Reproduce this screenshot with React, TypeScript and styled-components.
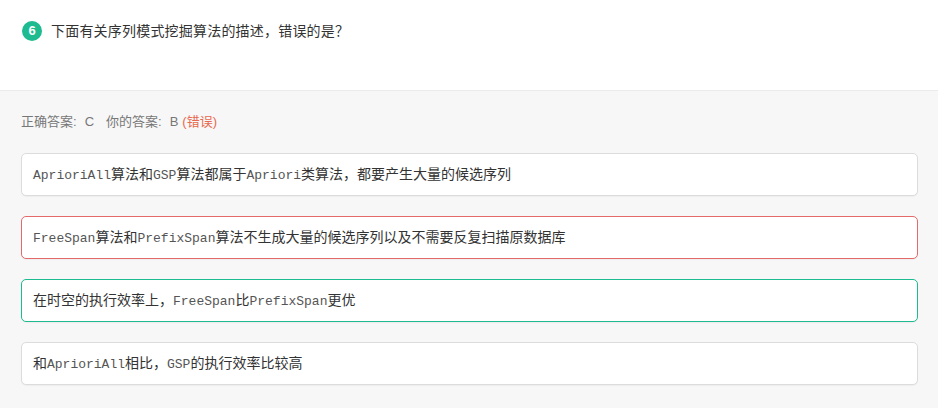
import React from "react";
import styled, { createGlobalStyle } from "styled-components";

const Global = createGlobalStyle`
  html, body { margin: 0; padding: 0; background: #f7f7f7; }
  body { font-family: "Liberation Sans", "Noto Sans CJK SC", sans-serif; }
  * { box-sizing: border-box; }
`;

const GREEN = "#1dbb8f";

const Page = styled.div`
  width: 938px;
  height: 408px;
  background: #f7f7f7;
  overflow: hidden;
`;

const QuestionBar = styled.div`
  height: 91px;
  background: #fff;
  border-bottom: 1px solid #ebebeb;
  padding: 21px 22px 0;
  display: flex;
  align-items: flex-start;
  gap: 9px;
`;

const Badge = styled.span`
  width: 20px;
  height: 20px;
  border-radius: 50%;
  background: ${GREEN};
  color: #fff;
  font: bold 13px/20px "Liberation Sans", sans-serif;
  text-align: center;
  flex: none;
`;

const QuestionText = styled.div`
  font-size: 14px;
  line-height: 20px;
  color: #333;
  letter-spacing: 0.2px;
  font-family: "Liberation Sans", "Noto Sans CJK SC", sans-serif;
`;

const Body = styled.div`
  padding: 21px 20px 0 21px;
  display: flex;
  flex-direction: column;
`;

const AnswerLine = styled.div`
  font-size: 13px;
  line-height: 20px;
  color: #777;
  margin-bottom: 21px;
  display: flex;
  align-items: baseline;
`;

const Label = styled.span<{ $gap?: number }>`
  margin-left: ${(p) => p.$gap ?? 0}px;
`;

const Value = styled.span`
  margin-left: 8px;
`;

const Wrong = styled.span`
  color: #e8694f;
  margin-left: 4px;
`;

const Options = styled.div`
  display: flex;
  flex-direction: column;
  gap: 20px;
`;

const Option = styled.div<{ $border: string }>`
  height: 43px;
  background: #fff;
  border: 1px solid ${(p) => p.$border};
  border-radius: 5px;
  box-shadow: 0 1px 1px rgba(0, 0, 0, 0.04);
  padding: 0 11px;
  display: flex;
  align-items: center;
`;

const OptionText = styled.p`
  margin: 0;
  font-size: 14px;
  line-height: 20px;
  color: #333;
  font-family: "Noto Sans CJK SC", sans-serif;
`;

const Code = styled.span`
  font-family: "Liberation Mono", monospace;
  font-size: 13px;
  color: #555;
`;

const NORMAL = "#dcdcdc";
const WRONG = "#e4696b";
const RIGHT = GREEN;

export default function App() {
  return (
    <Page>
      <Global />
      <QuestionBar>
        <Badge>6</Badge>
        <QuestionText>下面有关序列模式挖掘算法的描述，错误的是？</QuestionText>
      </QuestionBar>
      <Body>
        <AnswerLine>
          <Label>正确答案:</Label>
          <Value>C</Value>
          <Label $gap={12}>你的答案:</Label>
          <Value>B</Value>
          <Wrong>(错误)</Wrong>
        </AnswerLine>
        <Options>
          <Option $border={NORMAL}>
            <OptionText>
              <Code>AprioriAll</Code>算法和<Code>GSP</Code>算法都属于<Code>Apriori</Code>类算法，都要产生大量的候选序列
            </OptionText>
          </Option>
          <Option $border={WRONG}>
            <OptionText>
              <Code>FreeSpan</Code>算法和<Code>PrefixSpan</Code>算法不生成大量的候选序列以及不需要反复扫描原数据库
            </OptionText>
          </Option>
          <Option $border={RIGHT}>
            <OptionText>
              在时空的执行效率上，<Code>FreeSpan</Code>比<Code>PrefixSpan</Code>更优
            </OptionText>
          </Option>
          <Option $border={NORMAL}>
            <OptionText>
              和<Code>AprioriAll</Code>相比，<Code>GSP</Code>的执行效率比较高
            </OptionText>
          </Option>
        </Options>
      </Body>
    </Page>
  );
}
